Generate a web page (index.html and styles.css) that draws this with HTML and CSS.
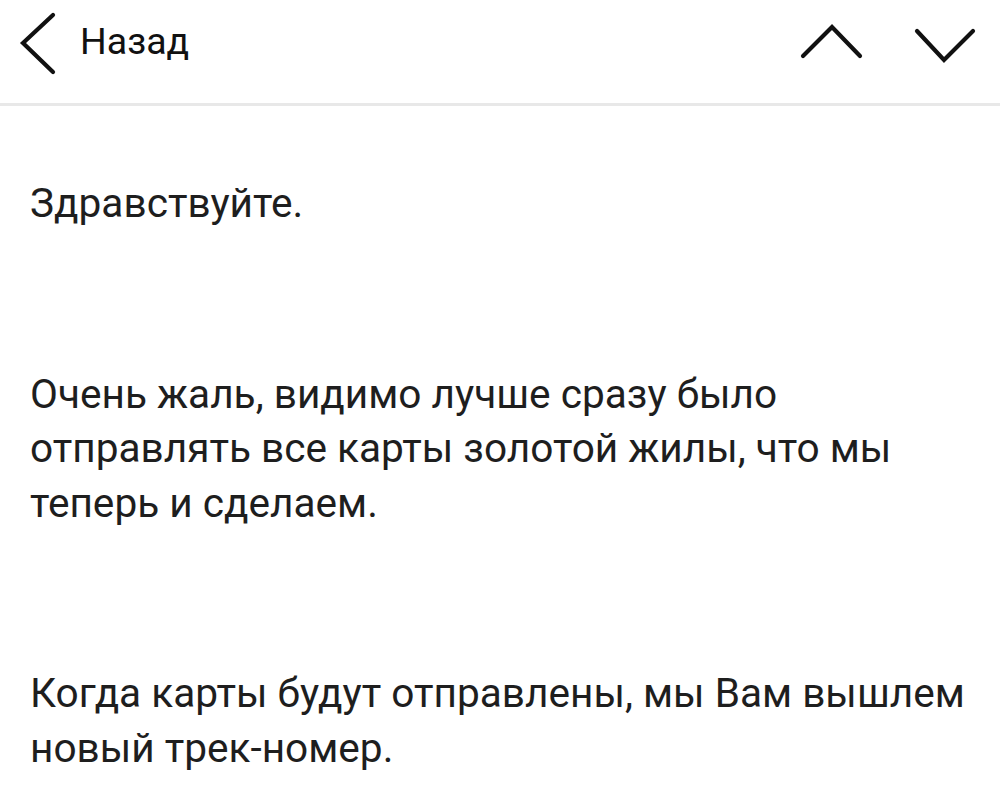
FILE: index.html
```html
<!DOCTYPE html>
<html lang="ru">
<head>
<meta charset="utf-8">
<title>Назад</title>
<link rel="stylesheet" href="styles.css">
</head>
<body>
<header class="topbar">
  <div class="back">
    <svg class="icon-back" width="40" height="64" viewBox="0 0 40 64" aria-hidden="true">
      <polyline points="35,4 5,32 35,61" fill="none" stroke="#111" stroke-width="4.2" stroke-linecap="round" stroke-linejoin="miter"/>
    </svg>
    <span class="back-label">Назад</span>
  </div>
  <div class="nav">
    <svg class="icon-up" width="68" height="64" viewBox="0 0 68 64" aria-hidden="true">
      <polyline points="5,45 34,16 62,45" fill="none" stroke="#111" stroke-width="4.2" stroke-linecap="round" stroke-linejoin="miter"/>
    </svg>
    <svg class="icon-down" width="66" height="64" viewBox="0 0 66 64" aria-hidden="true">
      <polyline points="5,20 32,49 61,20" fill="none" stroke="#111" stroke-width="4.2" stroke-linecap="round" stroke-linejoin="miter"/>
    </svg>
  </div>
</header>
<main class="message">
  <p>Здравствуйте.</p>
  <p>Очень жаль, видимо лучше сразу было отправлять все карты золотой жилы, что мы теперь и сделаем.</p>
  <p>Когда карты будут отправлены, мы Вам вышлем новый трек-номер.</p>
</main>
</body>
</html>
```
FILE: styles.css
```css
html, body {
  margin: 0;
  padding: 0;
  background: #ffffff;
}
body {
  font-family: Roboto, "Noto Sans", "Liberation Sans", sans-serif;
  color: #1e1e1e;
  width: 1000px;
  height: 789px;
  overflow: hidden;
}
.topbar {
  height: 106px;
  box-sizing: border-box;
  padding: 11px 22px 0 18px;
  display: flex;
  justify-content: space-between;
  align-items: flex-start;
  border-bottom: 3px solid #e8e8e8;
}
.back {
  display: flex;
  align-items: flex-start;
  gap: 22px;
}
.icon-back, .icon-up, .icon-down {
  display: block;
}
.back-label {
  font-size: 37.5px;
  line-height: 60px;
  color: #111;
}
.nav {
  display: flex;
  gap: 46px;
}
.message {
  padding: 70px 30px 0 30px;
}
.message p {
  margin: 0 0 136px 0;
  font-size: 40.6px;
  line-height: 54.5px;
}
.message p:last-child {
  margin-bottom: 0;
}
```
